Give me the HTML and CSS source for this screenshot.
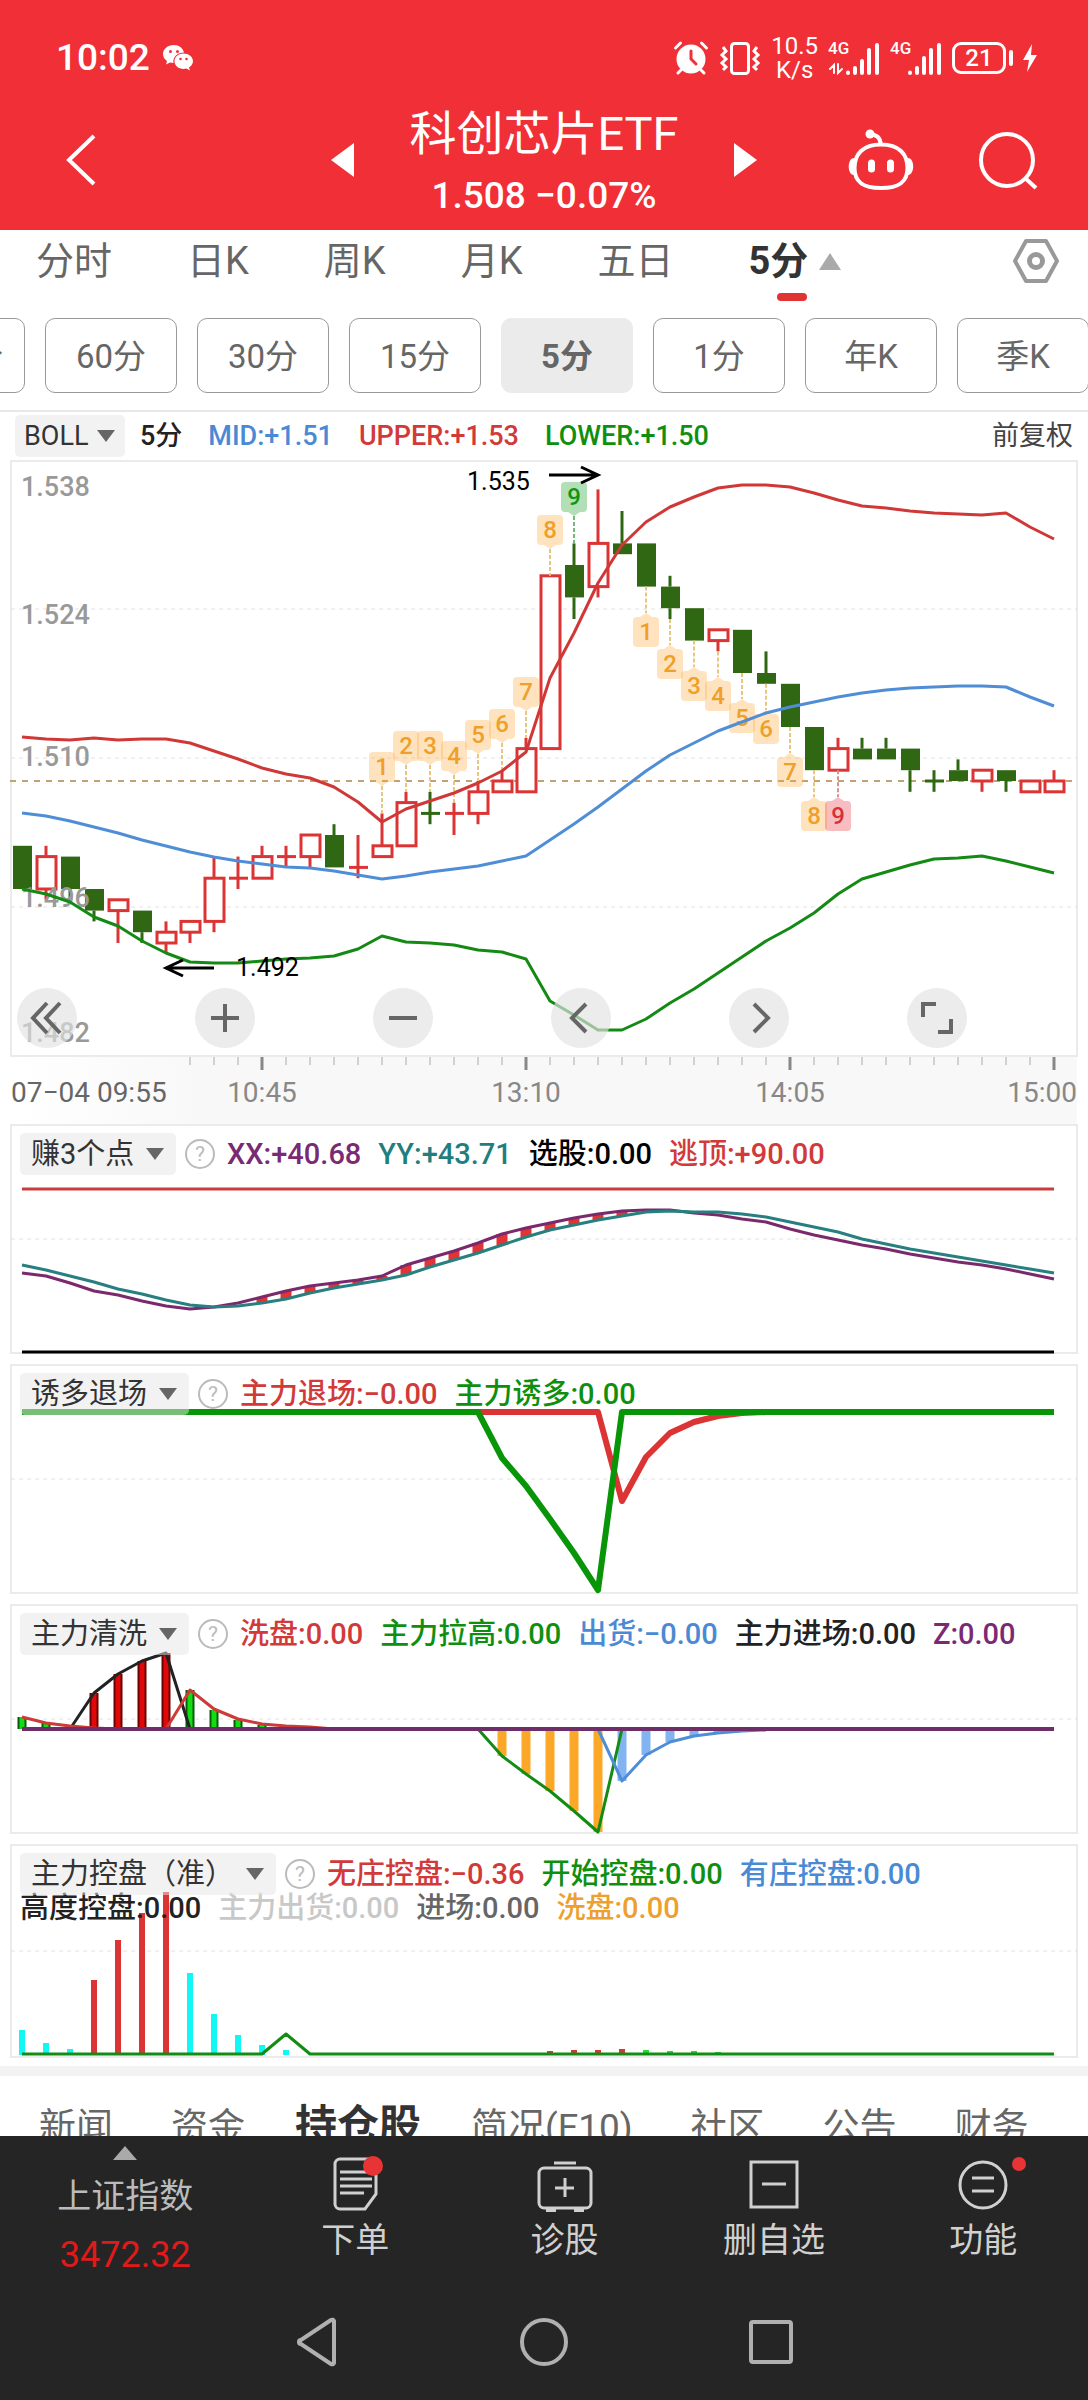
FILE: index.html
```html
<!DOCTYPE html>
<html lang="zh-CN">
<head>
<meta charset="utf-8">
<meta name="viewport" content="width=device-width, initial-scale=1">
<title>科创芯片ETF</title>
<link rel="stylesheet" href="styles.css">
</head>
<body>
<div class="app">
  <header class="header">
    <div class="status">
      <div class="status-left">
        <span class="clock">10:02</span>
        <svg class="wechat" width="32" height="28" viewBox="0 0 32 28" fill="#fff">
          <path d="M12 1C5.500 1 1 5 1 10c0 3 1.500 5.300 4 7l-1 3.500 4-2c1 .3 2 .5 3.500.5-1-6 4-10.500 10.500-10.500C21 4 17 1 12 1z"/>
          <path d="M21.500 9.500c-5 0-9 3.400-9 7.700s4 7.700 9 7.700c1 0 2-.2 3-.5l3.400 2-.9-3c2.300-1.500 4-3.700 4-6.200 0-4.300-4.400-7.700-9.500-7.700z"/>
          <g fill="#f12f36"><circle cx="8.500" cy="7.500" r="1.500"/><circle cx="15.500" cy="7.500" r="1.500"/><circle cx="18.500" cy="15" r="1.300"/><circle cx="24.500" cy="15" r="1.300"/></g>
        </svg>
      </div>
      <div class="status-right">
        <svg width="36" height="36" viewBox="0 0 36 36" fill="none" stroke="#fff" stroke-linecap="round">
          <circle cx="18" cy="19" r="14.500" fill="#fff" stroke="none"/>
          <path d="M2.500 8l5-5M33.500 8l-5-5M8 30l-3 3M28 30l3 3" stroke-width="3"/>
          <path d="M18 11v8l5 5" stroke="#f12f36" stroke-width="3"/>
        </svg>
        <svg width="42" height="36" viewBox="0 0 42 36" fill="none" stroke="#fff" stroke-width="3">
          <rect x="12.500" y="3.500" width="17" height="30" rx="3"/>
          <path d="M4 7l3 4-4 4 4 4-4 4 4 4-3 3M38 7l-3 4 4 4-4 4 4 4-4 4 3 3" stroke-width="3"/>
        </svg>
        <span class="speed">10.5<br>K/s</span>
        <span class="signal">
          <span class="net">4G</span>
          <svg width="52" height="34" viewBox="0 0 52 34" stroke="#fff" stroke-width="4" stroke-linecap="round" fill="none">
            <path d="M20 31.500v.5M27 27v5M34 20v12M41 9v23M49 4v28"/>
            <path d="M6 32V24l-4 4M10 23v9l4-4" stroke-width="2"/>
          </svg>
        </span>
        <span class="signal">
          <span class="net">4G</span>
          <svg width="52" height="34" viewBox="0 0 52 34" stroke="#fff" stroke-width="4" stroke-linecap="round" fill="none">
            <path d="M20 31.500v.5M27 27v5M34 17v15M41 9v23M49 4v28"/>
          </svg>
        </span>
        <span class="battery">21</span>
        <svg width="16" height="28" viewBox="0 0 16 28" fill="#fff"><path d="M10 0L1 16h6l-2 12L15 11H9z"/></svg>
      </div>
    </div>
    <div class="titlebar">
      <button class="icon-btn back" aria-label="返回">
        <svg width="36" height="56" viewBox="0 0 36 56" fill="none" stroke="#fff" stroke-width="4"><path d="M31 4L6 28l25 24"/></svg>
      </button>
      <div class="stock">
        <button class="icon-btn" aria-label="上一只">
          <svg width="24" height="36" viewBox="0 0 24 36" fill="#fff"><path d="M23 1v34L0 18z"/></svg>
        </button>
        <div class="stock-name">
          <h1>科创芯片ETF</h1>
          <p>1.508 −0.07%</p>
        </div>
        <button class="icon-btn" aria-label="下一只">
          <svg width="24" height="36" viewBox="0 0 24 36" fill="#fff"><path d="M1 1v34l23-17z"/></svg>
        </button>
      </div>
      <div class="tools">
        <button class="icon-btn" aria-label="助手">
          <svg width="68" height="62" viewBox="0 0 68 62" fill="none" stroke="#fff" stroke-width="4">
            <path d="M34 15.500C16 15.500 7.500 25 7.500 39S16 59 34 59s26.500-6 26.500-20S52 15.500 34 15.500z"/>
            <path d="M33.500 15c0-6-3-9-10-10"/>
            <circle cx="23" cy="5" r="4.500" fill="#fff" stroke="none"/>
            <path d="M7 29c-7 0-7 17 0 17zM61 29c7 0 7 17 0 17z" fill="#fff" stroke="none"/>
            <path d="M24.500 34v6M43.500 34v6" stroke-width="7" stroke-linecap="round"/>
          </svg>
        </button>
        <button class="icon-btn" aria-label="搜索">
          <svg width="62" height="60" viewBox="0 0 62 60" fill="none" stroke="#fff" stroke-width="4">
            <circle cx="30" cy="30" r="26"/><path d="M48 48l11 10"/>
          </svg>
        </button>
      </div>
    </div>
  </header>

  <main class="content">
    <nav class="views">
      <a href="#">分时</a>
      <a href="#">日K</a>
      <a href="#">周K</a>
      <a href="#">月K</a>
      <a href="#">五日</a>
      <a href="#" class="active">5分</a>
      <button class="icon-btn gear" aria-label="设置">
        <svg width="48" height="46" viewBox="0 0 48 46" fill="none" stroke="#999" stroke-width="4" stroke-linejoin="round">
          <path d="M14 3h20l11 20-11 20H14L3 23z"/><circle cx="24" cy="23" r="6.500" stroke-width="5"/>
        </svg>
      </button>
    </nav>
    <div class="periods">
      <button>120分</button>
      <button>60分</button>
      <button>30分</button>
      <button>15分</button>
      <button class="active">5分</button>
      <button>1分</button>
      <button>年K</button>
      <button>季K</button>
    </div>

    <div class="boll">
      <label class="chip"><select aria-label="主图指标"><option>BOLL</option></select></label>
      <span class="ink period">5分</span>
      <span class="blue">MID:+1.51</span>
      <span class="red">UPPER:+1.53</span>
      <span class="green">LOWER:+1.50</span>
      <span class="adjust">前复权</span>
    </div>

    <section class="main-chart">
      <svg id="kline" class="chart" viewBox="0 460 1088 664" role="img" aria-label="K线图"></svg>
      <div class="controls">
        <button aria-label="最早"><svg width="40" height="40" viewBox="0 0 40 40"><path d="M20 5L6 20l14 15M33 5L19 20l14 15"/></svg></button>
        <button aria-label="放大"><svg width="40" height="40" viewBox="0 0 40 40"><path d="M20 6v28M6 20h28"/></svg></button>
        <button aria-label="缩小"><svg width="40" height="40" viewBox="0 0 40 40"><path d="M6 20h28"/></svg></button>
        <button aria-label="左移"><svg width="40" height="40" viewBox="0 0 40 40"><path d="M25 6L11 20l14 14"/></svg></button>
        <button aria-label="右移"><svg width="40" height="40" viewBox="0 0 40 40"><path d="M15 6l14 14-14 14"/></svg></button>
        <button aria-label="全屏"><svg width="40" height="40" viewBox="0 0 40 40"><path d="M6 19V6h13M34 21v13H21"/></svg></button>
      </div>
    </section>

    <section class="panel">
      <svg id="points" class="chart" viewBox="0 1123 1088 230" role="img" aria-label="赚3个点"></svg>
      <div class="legend">
        <label class="chip"><select aria-label="指标一"><option>赚3个点</option></select></label>
        <button class="help" aria-label="说明">?</button>
        <span class="purple">XX:+40.68</span>
        <span class="teal">YY:+43.71</span>
        <span class="black">选股:0.00</span>
        <span class="red">逃顶:+90.00</span>
      </div>
    </section>
    <section class="panel">
      <svg id="exit" class="chart" viewBox="0 1363 1088 230" role="img" aria-label="诱多退场"></svg>
      <div class="legend">
        <label class="chip"><select aria-label="指标二"><option>诱多退场</option></select></label>
        <button class="help" aria-label="说明">?</button>
        <span class="red">主力退场:−0.00</span>
        <span class="green">主力诱多:0.00</span>
      </div>
    </section>
    <section class="panel">
      <svg id="wash" class="chart" viewBox="0 1603 1088 230" role="img" aria-label="主力清洗"></svg>
      <div class="legend">
        <label class="chip"><select aria-label="指标三"><option>主力清洗</option></select></label>
        <button class="help" aria-label="说明">?</button>
        <span class="red">洗盘:0.00</span>
        <span class="green">主力拉高:0.00</span>
        <span class="blue">出货:−0.00</span>
        <span class="ink">主力进场:0.00</span>
        <span class="purple">Z:0.00</span>
      </div>
    </section>
    <section class="panel">
      <svg id="control" class="chart" viewBox="0 1843 1088 214" role="img" aria-label="主力控盘"></svg>
      <div class="legend">
        <label class="chip"><select aria-label="指标四"><option>主力控盘（准）</option></select></label>
        <button class="help" aria-label="说明">?</button>
        <span class="red">无庄控盘:−0.36</span>
        <span class="green">开始控盘:0.00</span>
        <span class="blue">有庄控盘:0.00</span>
        <div class="legend-row">
          <span class="ink">高度控盘:0.00</span>
          <span class="pale">主力出货:0.00</span>
          <span class="gray">进场:0.00</span>
          <span class="orange">洗盘:0.00</span>
        </div>
      </div>
    </section>

    <nav class="info-tabs">
      <a href="#">新闻</a>
      <a href="#">资金</a>
      <a href="#" class="active">持仓股</a>
      <a href="#">简况(F10)</a>
      <a href="#">社区</a>
      <a href="#">公告</a>
      <a href="#">财务</a>
    </nav>
  </main>

  <footer class="footer">
    <div class="actions">
      <button class="index">
        <svg width="26" height="14" viewBox="0 0 26 14" fill="#aaa"><path d="M13 0l12 14H1z"/></svg>
        <span>上证指数</span>
        <strong>3472.32</strong>
      </button>
      <button class="action">
        <svg width="60" height="56" viewBox="0 0 60 56">
          <path d="M15 3h31a5 5 0 0 1 5 5v30L40 53H15a5 5 0 0 1-5-5V8a5 5 0 0 1 5-5z"/>
          <path d="M15 16h32M15 23h32M15 30h32M15 37h24"/>
          <circle class="dot" cx="48" cy="10" r="10"/>
        </svg>
        <span>下单</span>
      </button>
      <button class="action">
        <svg width="60" height="56" viewBox="0 0 60 56">
          <rect x="4" y="12" width="52" height="40" rx="5"/>
          <path d="M19 7h22M30 22v19M20 32h19"/><path d="M11 54h10M39 54h10" stroke-width="4"/>
        </svg>
        <span>诊股</span>
      </button>
      <button class="action">
        <svg width="60" height="56" viewBox="0 0 60 56">
          <rect x="7" y="6" width="46" height="45"/><path d="M18 28h24"/>
        </svg>
        <span>删自选</span>
      </button>
      <button class="action">
        <svg width="90" height="56" viewBox="0 0 90 56">
          <circle cx="45" cy="29" r="23"/><path d="M34 22h22M34 35h22"/>
          <circle class="dot" cx="81" cy="8" r="7"/>
        </svg>
        <span>功能</span>
      </button>
    </div>
    <div class="sysnav">
      <button aria-label="后退"><svg width="48" height="52" viewBox="0 0 48 52"><path d="M41 5v42a2 2 0 0 1-3 1L8 28a2 2 0 0 1 0-4L38 4a2 2 0 0 1 3 1z"/></svg></button>
      <button aria-label="主页"><svg width="48" height="52" viewBox="0 0 48 52"><circle cx="24" cy="26" r="22"/></svg></button>
      <button aria-label="多任务"><svg width="48" height="52" viewBox="0 0 48 52"><rect x="4" y="6" width="40" height="40" rx="2"/></svg></button>
    </div>
  </footer>
</div>
<script src="charts.js"></script>
</body>
</html>
```
FILE: styles.css
```css
* { box-sizing: border-box; }

body {
  margin: 0;
  background: #fff;
  color: #666;
  font-family: Roboto, "Noto Sans CJK SC", sans-serif;
}

button, select {
  margin: 0;
  padding: 0;
  border: 0;
  background: none;
  color: inherit;
  font: inherit;
}

a { color: inherit; text-decoration: none; }
svg { display: block; }
h1, p { margin: 0; font-weight: 400; }

.app { display: flex; flex-direction: column; height: 100vh; }

/* header */
.header { flex: none; background: #f12f36; color: #fff; }
.status {
  display: flex;
  justify-content: space-between;
  align-items: center;
  padding: 36px 50px 0 56px;
  height: 80px;
}
.status-left, .status-right { display: flex; align-items: center; }
.status-left { gap: 12px; }
.status-right { gap: 10px; }
.clock { font-size: 37px; font-weight: 500; line-height: 46px; }
.speed { font-size: 24px; line-height: 24px; text-align: center; }
.signal { display: flex; position: relative; }
.net { position: absolute; left: 0; top: -2px; font-size: 17px; line-height: 18px; font-weight: 500; }
.battery {
  position: relative;
  width: 54px;
  height: 32px;
  margin-right: 6px;
  border: 3px solid #fff;
  border-radius: 9px;
  font-size: 24px;
  font-weight: 500;
  line-height: 26px;
  text-align: center;
}
.battery::after {
  content: "";
  position: absolute;
  right: -10px;
  top: 5px;
  width: 4px;
  height: 16px;
  border-radius: 2px;
  background: #fff;
}
.titlebar {
  display: grid;
  grid-template-columns: 1fr auto 1fr;
  align-items: center;
  height: 150px;
  padding: 10px 49px 0;
}
.icon-btn { display: block; }
.back { justify-self: start; padding-left: 14px; }
.stock { display: flex; align-items: center; gap: 54px; }
.stock-name { padding-top: 6px; text-align: center; }
.stock-name h1 { font-size: 47px; line-height: 66px; }
.stock-name p { font-size: 37px; font-weight: 500; line-height: 58px; }
.tools { display: flex; justify-content: flex-end; align-items: center; gap: 62px; }

/* chart view tabs */
.content { flex: 1; min-height: 0; overflow: hidden; }
.views {
  display: flex;
  align-items: center;
  gap: 75px;
  height: 74px;
  padding: 0 28px 12px 36px;
  font-size: 38px;
  line-height: 54px;
}
.views .active {
  position: relative;
  display: flex;
  align-items: center;
  gap: 11px;
  color: #333;
  font-weight: 700;
}
.views .active::after {
  content: "";
  border: solid transparent;
  border-width: 0 11px 17px;
  border-bottom-color: #aaa;
}
.views .active::before {
  content: "";
  position: absolute;
  left: 28px;
  bottom: -13px;
  width: 30px;
  height: 8px;
  border-radius: 4px;
  background: #e23333;
}
.gear { margin-left: auto; }

.periods {
  display: flex;
  gap: 20px;
  margin: 14px -107px 0;
}
.periods button {
  flex: none;
  width: 132px;
  height: 75px;
  padding-bottom: 4px;
  border: 1px solid #999;
  border-radius: 10px;
  font-size: 33px;
}
.periods .active { border-color: #ebebeb; background: #ebebeb; font-weight: 700; }

/* indicator rows */
.boll {
  display: flex;
  align-items: center;
  gap: 26px;
  height: 50px;
  margin-top: 17px;
  padding: 0 15px;
  border-top: 2px solid #e8e8e8;
  font-size: 27px;
  line-height: 34px;
}
.period { margin: 0 0 0 -11px; }
.adjust { margin-left: auto; color: #444; }

.chip {
  position: relative;
  display: block;
  height: 42px;
  border-radius: 5px;
  background: rgba(229, 229, 229, 0.5);
  color: #333;
}
.chip select {
  appearance: none;
  height: 42px;
  padding: 0 36px 0 9px;
  line-height: 42px;
}
.chip::after {
  content: "";
  position: absolute;
  right: 10px;
  top: 15px;
  border: solid transparent;
  border-width: 12px 9px 0;
  border-top-color: #666;
}

.chart { width: 100%; height: auto; }
.chart text { font-family: Roboto, sans-serif; }

.main-chart { position: relative; }
.controls {
  position: absolute;
  left: 17px;
  right: 121px;
  bottom: 76px;
  display: flex;
  justify-content: space-between;
}
.controls button {
  display: grid;
  place-items: center;
  width: 60px;
  height: 60px;
  border-radius: 50%;
  background: rgba(226, 226, 226, 0.65);
}
.controls svg { fill: none; stroke: #666; stroke-width: 4; }

.panel { display: grid; margin-bottom: 10px; }
.panel > * { grid-area: 1 / 1; }
.panel:last-of-type { margin-bottom: 0; }
.legend {
  display: flex;
  flex-wrap: wrap;
  align-content: flex-start;
  align-items: center;
  column-gap: 17px;
  padding: 9px 20px 0;
  font-size: 29px;
  line-height: 34px;
}
.legend .chip { margin-right: -8px; }
.legend .chip select { padding-left: 11px; padding-right: 41px; }
.legend .chip::after { right: 12px; }
.help {
  width: 30px;
  height: 30px;
  margin-right: -5px;
  border: 2px solid #bbb;
  border-radius: 50%;
  color: #bbb;
  font-size: 21px;
  line-height: 26px;
}
.legend-row { display: flex; gap: 17px; width: 100%; margin-top: -4px; }

.ink { color: #222; }
.black { color: #000; }
.red { color: #d23a3a; }
.green { color: #0f8f0f; }
.blue { color: #4a8ad4; }
.purple { color: #7a2a72; }
.teal { color: #1f7f80; }
.pale { color: #c8c8c8; }
.gray { color: #666; }
.orange { color: #eda02d; }
.legend > span, .legend-row > span, .boll > span { font-weight: 500; white-space: nowrap; }
.boll > .adjust { font-weight: 400; }

/* information tabs */
.info-tabs {
  display: flex;
  align-items: baseline;
  gap: 58px;
  margin-top: 8px;
  padding: 18px 39px;
  border-top: 10px solid #f3f3f3;
  font-size: 37px;
  line-height: 64px;
  white-space: nowrap;
}
.info-tabs .active { margin: 0 -8px; color: #333; font-size: 42px; font-weight: 700; }

/* bottom bar */
.footer { flex: none; background: #252525; color: #d0d0d0; }
.actions {
  display: grid;
  grid-template-columns: 250fr 209fr 209fr 209fr 209fr;
  height: 144px;
  font-size: 34px;
  line-height: 44px;
}
.index, .action { display: flex; flex-direction: column; align-items: center; }
.index { padding-top: 10px; color: #bbb; }
.index span { margin-top: 14px; }
.index strong { margin-top: 15px; color: #e01a1a; font-size: 36px; font-weight: 400; }
.action { padding-top: 20px; }
.action span { margin-top: 6px; }
.action svg { fill: none; stroke: #d0d0d0; stroke-width: 3; }
.action .dot { fill: #e83434; stroke: none; }
.sysnav { display: flex; justify-content: center; align-items: flex-start; gap: 179px; height: 120px; padding-top: 36px; }
.sysnav svg { fill: none; stroke: #b0b0b0; stroke-width: 4; }
```
FILE: charts.js
```js
const NS = 'http://www.w3.org/2000/svg';
const RED = '#dc3434', GREEN = '#2f6713';
const x = i => 22 + 24 * i;
const priceY = p => 781 - (p - 508) * 10.8;

function add(svg, tag, attrs, text) {
  const el = document.createElementNS(NS, tag);
  for (const k in attrs) el.setAttribute(k, attrs[k]);
  if (text !== undefined) el.textContent = text;
  svg.appendChild(el);
  return el;
}
function path(svg, ys, color, width = 3, start = 0) {
  const points = ys.map((y, i) => `${x(i + start)},${y}`).join(' ');
  add(svg, 'polyline', { points, fill: 'none', stroke: color, 'stroke-width': width, 'stroke-linejoin': 'round' });
}
function hline(svg, x1, x2, y, color, width, dash) {
  const a = { x1, x2, y1: y, y2: y, stroke: color, 'stroke-width': width };
  if (dash) a['stroke-dasharray'] = dash;
  add(svg, 'line', a);
}
function vline(svg, cx, y1, y2, color, width, dash) {
  const a = { x1: cx, x2: cx, y1, y2, stroke: color, 'stroke-width': width };
  if (dash) a['stroke-dasharray'] = dash;
  add(svg, 'line', a);
}
function bar(svg, i, y1, y2, width, color) {
  add(svg, 'rect', { x: x(i) - width / 2, y: Math.min(y1, y2), width, height: Math.abs(y2 - y1), fill: color });
}
function frame(svg, top, bottom, grid) {
  add(svg, 'rect', { x: 11, y: top, width: 1066, height: bottom - top, fill: 'none', stroke: '#ebebeb', 'stroke-width': 2 });
  grid.forEach(y => hline(svg, 11, 1077, y, '#e2e2e2', 1, '4 4'));
}

/* candles: open, close, high, low in thousandths above 1.000 */
const candles = [
  [502,498,502,498],[498,501,502,497],[501,498,501,497],[498,496,498,495],[496,497,497,493],
  [496,494,496,493],[493,494,495,492],[494,495,495,493],[495,499,501,494],[499,499,501,498],
  [499,501,502,499],[501,501,502,500],[501,503,503,500],[503,500,504,500],[500,500,503,499],
  [501,502,505,501],[502,506,507,502],[505,505,507,504,1],[505,505,506,503],[505,507,508,504],
  [507,508,509,507],[507,511,512,507],[511,527,527,511],[528,525,530,523],[526,530,535,525],
  [530,529,533,529],[530,526,530,526],[526,524,527,523],[524,521,524,521],[521,522,522,520],
  [522,518,522,518],[518,517,520,517],[517,513,517,513],[513,509,513,509],[509,511,512,509],
  [511,510,512,510],[511,510,512,510],[511,509,511,507],[508,508,509,507,1],[509,508,510,508],
  [508,509,509,507],[509,508,509,507],[507,508,508,507],[507,508,509,507]
];
const upper = [737,739,740,738,740,739,739,743,751,759,768,774,778,787,802,822,809,801,793,783,771,752,678,633,583,545,522,507,497,488,485,485,487,493,500,506,508,511,513,514,515,513,527,539];
const mid = [813,816,821,827,833,840,846,852,857,861,864,867,868,871,875,879,876,872,869,866,861,856,840,824,807,789,771,755,743,731,722,713,707,702,697,693,690,688,687,686,686,687,697,706];
const lower = [889,894,902,917,926,941,953,962,963,963,961,959,958,956,949,936,942,943,945,950,952,959,1001,1015,1030,1030,1019,1003,989,973,957,941,928,913,894,879,872,865,859,858,856,861,867,873];
const ORANGE = ['rgba(255,170,60,.33)', '#eea02a', '#e6c680'];
/* turn counters: candle index, count, box top, points down?, colours */
const badges = [
  [15,1,752,1],[16,2,731,1],[17,3,731,1],[18,4,741,1],[19,5,720,1],[20,6,709,1],[21,7,677,1],[22,8,515,1],
  [23,9,482,1,['rgba(30,160,40,.34)','#0f960f','#76b87c']],
  [26,1,617,0],[27,2,649,0],[28,3,671,0],[29,4,681,0],[30,5,703,0],[31,6,714,0],[32,7,757,0],[33,8,801,0],
  [34,9,801,0,['rgba(230,50,60,.32)','#d83038','#dc9090']]
];

function drawKline(svg) {
  const defs = add(svg, 'defs', {});
  const g = add(defs, 'linearGradient', { id: 'strip' });
  add(g, 'stop', { offset: 0, 'stop-color': '#fff' });
  add(g, 'stop', { offset: 0.18, 'stop-color': '#f8f8f8' });
  add(g, 'stop', { offset: 1, 'stop-color': '#f8f8f8' });
  add(svg, 'rect', { x: 11, y: 1056, width: 1066, height: 68, fill: 'url(#strip)' });
  frame(svg, 461, 1056, [609, 758, 907]);
  hline(svg, 10, 1077, 781, '#c3a172', 2, '6 6');

  candles.forEach(([o, c, h, l, down], i) => {
    const rising = c > o || (c === o && !down);
    const color = rising ? RED : GREEN;
    const top = priceY(Math.max(o, c)), bottom = priceY(Math.min(o, c));
    vline(svg, x(i), priceY(h), top, color, 3);
    vline(svg, x(i), bottom, priceY(l), color, 3);
    if (o === c) hline(svg, x(i) - 9, x(i) + 10, top, color, 3);
    else if (rising) add(svg, 'rect', { x: x(i) - 9, y: top, width: 19, height: bottom - top, fill: '#fff', stroke: color, 'stroke-width': 3 });
    else add(svg, 'rect', { x: x(i) - 9, y: top, width: 19, height: bottom - top, fill: color });
  });

  badges.forEach(([i, n, top, over, colors = ORANGE]) => {
    const cx = x(i), l = cx - 13, r = cx + 13, b = top + 30;
    vline(svg, cx, over ? b + 4 : priceY(candles[i][3]), over ? priceY(candles[i][2]) : top - 4, colors[2], 2, '4 2');
    const tipDown = over ? `H${cx + 6}L${cx} ${b + 4}L${cx - 6} ${b}` : '';
    const tipUp = over ? '' : `H${cx - 6}L${cx} ${top - 4}L${cx + 6} ${top}`;
    add(svg, 'path', {
      d: `M${l + 4} ${top}${tipUp}H${r - 4}Q${r} ${top} ${r} ${top + 4}V${b - 4}Q${r} ${b} ${r - 4} ${b}${tipDown}H${l + 4}Q${l} ${b} ${l} ${b - 4}V${top + 4}Q${l} ${top} ${l + 4} ${top}z`,
      fill: colors[0]
    });
    add(svg, 'text', { x: cx, y: top + 23, 'text-anchor': 'middle', 'font-size': 24, 'font-weight': 500, fill: colors[1] }, n);
  });

  [['1.538', 496], ['1.524', 624], ['1.510', 766], ['1.496', 907], ['1.482', 1042]].forEach(([t, y]) =>
    add(svg, 'text', { x: 21, y, 'font-size': 27, 'font-weight': 500, fill: '#999' }, t));

  path(svg, upper, '#d03838');
  path(svg, mid, '#4f8ed6');
  path(svg, lower, '#148a14');

  add(svg, 'path', { d: 'M549 475H597M581 467L598 475L581 483M214 968H167M183 960L166 968L183 976', fill: 'none', stroke: '#000', 'stroke-width': 3 });
  add(svg, 'text', { x: 467, y: 490, 'font-size': 25, fill: '#000' }, '1.535');
  add(svg, 'text', { x: 236, y: 976, 'font-size': 25, fill: '#000' }, '1.492');

  for (let i = 7; i < 44; i++) {
    const major = (i - 10) % 11 === 0;
    vline(svg, x(i), 1057, major ? 1070 : 1065, major ? '#888' : '#aaa', major ? 3 : 1);
  }
  [['07−04 09:55', 11, 'start', '#666'], ['10:45', 262, 'middle', '#888'], ['13:10', 526, 'middle', '#888'],
   ['14:05', 790, 'middle', '#888'], ['15:00', 1077, 'end', '#888']].forEach(([t, tx, anchor, fill]) =>
    add(svg, 'text', { x: tx, y: 1102, 'font-size': 28, 'text-anchor': anchor, fill }, t));
}

function drawPoints(svg) {
  const xx = [1272,1275,1282,1290,1294,1300,1305,1308,1306,1302,1296,1290,1285,1282,1279,1275,1264,1257,1250,1242,1233,1227,1222,1217,1213,1210,1209,1209,1212,1214,1218,1221,1228,1234,1239,1244,1248,1253,1257,1261,1264,1268,1273,1278];
  const yy = [1264,1269,1275,1281,1288,1293,1299,1304,1306,1305,1302,1298,1292,1287,1283,1279,1274,1266,1259,1252,1244,1236,1229,1224,1219,1215,1211,1210,1211,1211,1213,1216,1221,1226,1231,1238,1243,1248,1252,1256,1260,1264,1268,1272];
  frame(svg, 1124, 1352, [1238]);
  hline(svg, 22, 1054, 1188, '#cb3c3c', 3);
  hline(svg, 22, 1054, 1351, '#000', 3);
  for (let i = 10; i < 26; i++) bar(svg, i, xx[i], yy[i], 11, '#e23434');
  path(svg, xx, '#7a2a6c');
  path(svg, yy, '#277f80');
}

function drawExit(svg) {
  frame(svg, 1364, 1592, [1478]);
  path(svg, [1411,1411,1411,1411,1411,1411,1500,1456,1432,1421,1415,1412,1411], RED, 6, 19);
  const green = Array(44).fill(1411);
  [1457,1485,1518,1552,1589].forEach((y, k) => { green[20 + k] = y; });
  path(svg, green, '#089608', 6);
}

function drawWash(svg) {
  frame(svg, 1604, 1832, [1718]);
  const base = 1728;
  const lime = { 0: 1716, 1: 1722, 7: 1689, 8: 1709, 9: 1719, 10: 1724 };
  for (const i in lime) { bar(svg, +i, lime[i], base, 9, '#0a5a0a'); bar(svg, +i, lime[i], base, 5, '#12dc12'); }
  const dark = { 3: 1692, 4: 1673, 5: 1660, 6: 1652 };
  for (const i in dark) { bar(svg, +i, dark[i], base, 9, '#6a0404'); bar(svg, +i, dark[i], base, 5, '#e00808'); }
  const drop = [1755,1773,1790,1810,1831];
  drop.forEach((y, k) => bar(svg, 20 + k, base, y, 9, '#fba728'));
  [1780,1754,1741,1735,1733,1731].forEach((y, k) => bar(svg, 25 + k, base, y, 9, '#82b4f2'));
  path(svg, [1728,1692,1673,1660,1652,1728], '#222', 3, 2);
  path(svg, [1716,1722,1725,1727,1728,1728,1728,1689,1708,1718,1723,1725,1726,1728], '#cc3a3a', 3);
  path(svg, [1728, ...drop, 1728], '#138c13', 3, 19);
  path(svg, [1728,1780,1754,1741,1735,1732,1730,1729], '#4f8ed6', 3, 24);
  hline(svg, 22, 1054, base, '#6e2f68', 4);
}

function drawControl(svg) {
  frame(svg, 1844, 2056, [1950]);
  const base = 2054;
  const cyan = { 0: 2029, 1: 2042, 2: 2048, 7: 1972, 8: 2013, 9: 2034, 10: 2044, 11: 2049 };
  for (const i in cyan) bar(svg, +i, cyan[i], base, 6, '#12f6f6');
  const red = { 3: 1979, 4: 1939, 5: 1912, 6: 1891, 22: 2050, 23: 2049, 24: 2049, 25: 2048 };
  for (const i in red) bar(svg, +i, red[i], base, 6, '#dc3434');
  const lime = { 26: 2049, 27: 2050, 28: 2050, 29: 2051 };
  for (const i in lime) bar(svg, +i, lime[i], base, 6, '#22dd33');
  const line = Array(44).fill(2053);
  line[11] = 2033;
  path(svg, line, '#138c13', 3);
}

drawKline(document.getElementById('kline'));
drawPoints(document.getElementById('points'));
drawExit(document.getElementById('exit'));
drawWash(document.getElementById('wash'));
drawControl(document.getElementById('control'));
```
